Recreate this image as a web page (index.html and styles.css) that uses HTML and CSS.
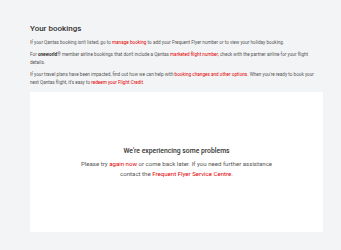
FILE: index.html
```html
<!DOCTYPE html>
<html lang="en">
<head>
    <meta charset="UTF-8">
    <meta name="viewport" content="width=device-width, initial-scale=1.0">
    <title>Your bookings</title>
    <link rel="stylesheet" href="styles.css">
</head>
<body>
    <div class="container">
        <h2 class="title">Your bookings</h2>
        <p class="info">If your Qantas booking isn't listed, go to <a href="#">manage booking</a> to add your Frequent Flyer number or to view your holiday booking.</p>
        <p class="info">For <span class="brand">oneworld</span>® member airline bookings that don't include a Qantas <a href="#">marketed flight number</a>, check with the partner airline for your flight details.</p>
        <p class="info">If your travel plans have been impacted, find out how we can help with <a href="#">booking changes and other options</a>. When you're ready to book your next Qantas flight, it's easy to <a href="#">redeem your Flight Credit</a>.</p>

        <div class="error-box">
            <h3 class="error-title">We're experiencing some problems</h3>
            <p class="error-text">Please try <a href="#">again now</a> or come back later. If you need further assistance contact the <a href="#">Frequent Flyer Service Centre</a>.</p>
        </div>
    </div>
</body>
</html>
```

FILE: styles.css
```css
body {
    margin: 0;
    background-color: #f3f4f6;
    font-family: Roboto, "Liberation Sans", sans-serif;
    color: #555;
}
.container {
    padding: 24px 18px 0 30px;
}
.title {
    margin: 0 0 5px;
    font-size: 8px;
    font-weight: 500;
    color: #333;
    line-height: 10px;
}
.info {
    margin: 0 0 4px;
    font-size: 4.65px;
    line-height: 8px;
}
.brand {
    font-weight: bold;
    color: #333;
}
a {
    color: #e40000;
    text-decoration: none;
}
.error-box {
    margin-top: 5px;
    background-color: #fff;
    height: 140px;
    display: flex;
    flex-direction: column;
    justify-content: center;
    align-items: center;
    text-align: center;
}
.error-title {
    margin: 0 0 3px;
    font-size: 6.8px;
    font-weight: 500;
    color: #333;
    line-height: 10px;
}
.error-text {
    margin: 0;
    font-size: 6.1px;
    line-height: 10px;
    max-width: 210px;
}
```
